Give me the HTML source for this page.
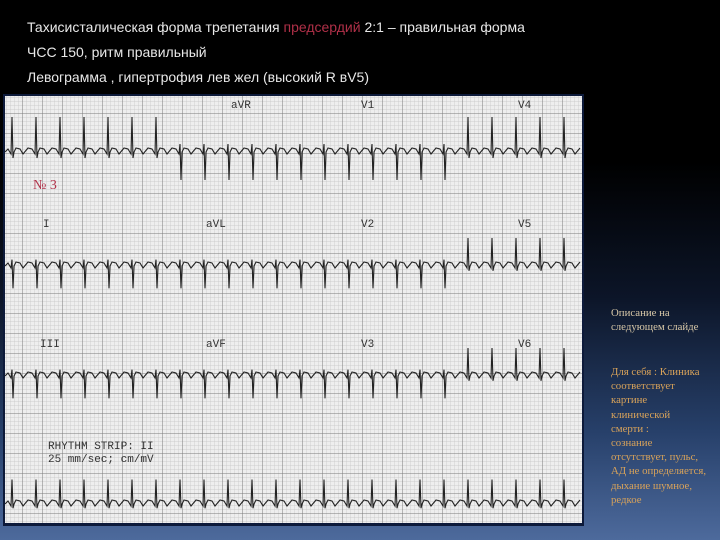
<!DOCTYPE html>
<html><head><meta charset="utf-8"><style>
body{margin:0;width:720px;height:540px;overflow:hidden;position:relative;
background:linear-gradient(180deg,#000 0%,#000 30%,#0c1528 55%,#27406a 80%,#4d6a9c 100%);
font-family:"Liberation Sans",sans-serif;}
.t{position:absolute;left:27px;color:#e8e8e8;font-size:14px;}
.r{position:absolute;left:611px;font-family:"Liberation Serif",serif;font-size:10.8px;line-height:14.2px;color:#d8c8a8;}
.o{color:#d9a35a;}
</style></head><body>
<div class="t" style="top:19px">Тахисисталическая форма трепетания <span style="color:#b03048">предсердий</span>  2:1 – правильная форма</div>
<div class="t" style="top:44px">ЧСС 150, ритм правильный</div>
<div class="t" style="top:69px">Левограмма , гипертрофия лев жел (высокий R вV5)</div>
<svg style="position:absolute;left:3px;top:94px" width="581" height="432">
<defs>
<pattern id="s" width="4" height="4" patternUnits="userSpaceOnUse"><path d="M4 0V4H0" fill="none" stroke="#c4c4c4" stroke-width=".7"/></pattern>
<pattern id="b" width="20" height="20" patternUnits="userSpaceOnUse"><rect width="20" height="20" fill="url(#s)"/><path d="M20 0V20H0" fill="none" stroke="#7a7a7a" stroke-width="1"/></pattern>
</defs>
<rect width="581" height="432" fill="#0d1a3a"/>
<rect x="2" y="2" width="577" height="427" fill="#eeeeee"/>
<rect x="2" y="2" width="577" height="427" fill="url(#b)"/>
<g id="tr" fill="none" stroke="#222" stroke-width="1.1"></g>
<g font-family="Liberation Mono,monospace" font-size="11" fill="#333">
<text x="228" y="14">aVR</text><text x="358" y="14">V1</text><text x="515" y="14">V4</text>
<text x="40" y="133">I</text><text x="203" y="133">aVL</text><text x="358" y="133">V2</text><text x="515" y="133">V5</text>
<text x="37" y="253">III</text><text x="203" y="253">aVF</text><text x="358" y="253">V3</text><text x="515" y="253">V6</text>
<text x="45" y="355">RHYTHM STRIP: II</text><text x="45" y="368">25 mm/sec; cm/mV</text>
</g>
<text x="30" y="95" font-family="Liberation Serif,serif" font-size="14" fill="#b03048">№ 3</text>
</svg>
<div class="r" style="top:306px">Описание на<br>следующем слайде</div>
<div class="r o" style="top:365px">Для себя : Клиника<br>соответствует<br>картине<br>клинической<br>смерти :<br>сознание<br>отсутствует, пульс,<br>АД не определяется,<br>дыхание шумное,<br>редкое</div>
<script>
var g=document.getElementById('tr'),rows=[[58,1],[172,0.8],[282,0.8],[410,0.7]];
rows.forEach(function(r,i){var y=r[0],p='M2 '+y,x=2,k=0;
while(x<578){var seg=Math.floor((x-2)/145);var up=(seg==0&&i==0)||(seg==3)?1:-1;
if(i==3)up=1;
p+=' L'+(x+3)+' '+(y-3)+' L'+(x+6)+' '+(y+2);
if(k%2==0){p+=' L'+(x+7)+' '+(y-(up>0?35:8)*r[1])+' L'+(x+8)+' '+(y+(up>0?6:28)*r[1])+' L'+(x+9)+' '+y;}
p+=' L'+(x+11)+' '+(y-4);x+=12;k++;}
var e=document.createElementNS('http://www.w3.org/2000/svg','path');e.setAttribute('d',p);g.appendChild(e);});
</script>
</body></html>
